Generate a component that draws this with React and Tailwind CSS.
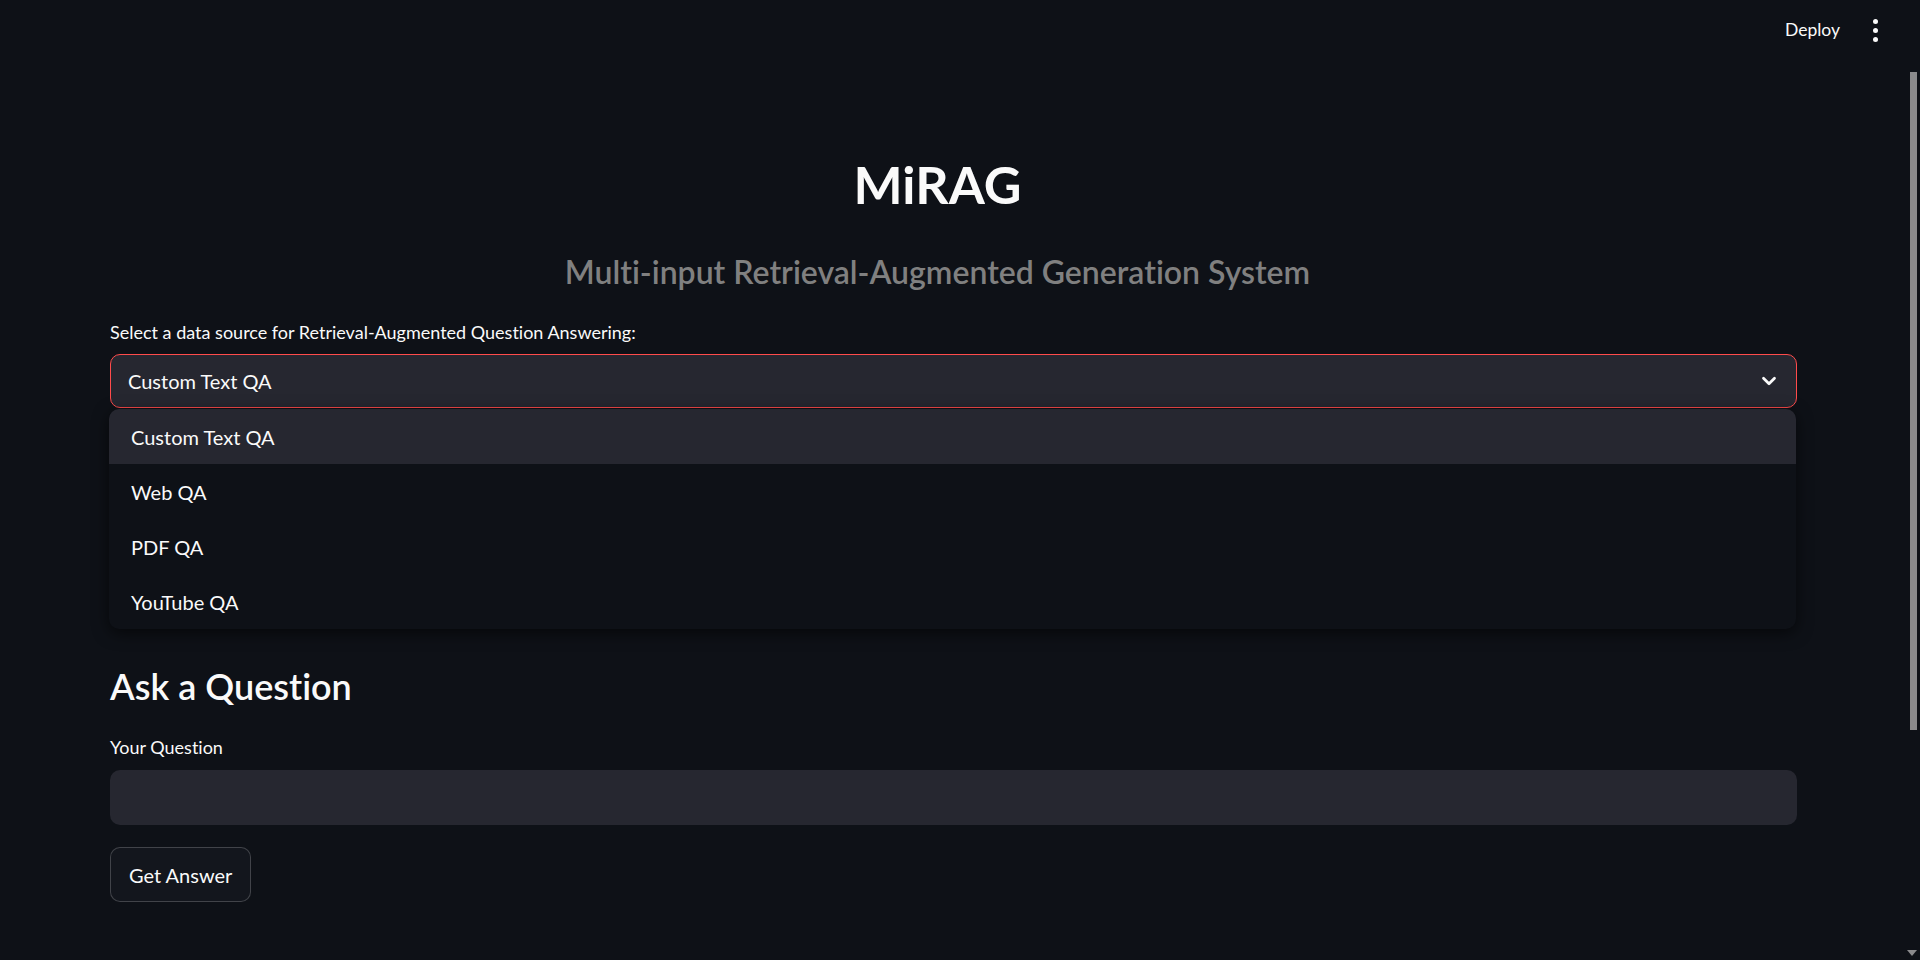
import React from "react";
import { ChevronDown } from "lucide-react";

const OPTIONS = ["Custom Text QA", "Web QA", "PDF QA", "YouTube QA"];

const App = () => {
  return (
    <div
      className="relative h-[960px] w-full overflow-hidden bg-[#0e1117] text-[#fafafa] [font-variant-ligatures:none]"
      style={{ fontFamily: "Lato, 'Noto Sans', sans-serif" }}
    >
      {/* Top bar */}
      <header className="flex h-[60px] items-center justify-end gap-[33px] pr-[42px]">
        <button className="text-[17.5px] text-[#fafafa]">Deploy</button>
        <div className="flex flex-col gap-[4px]">
          <span className="block h-[5px] w-[5px] rounded-full bg-[#fafafa]" />
          <span className="block h-[5px] w-[5px] rounded-full bg-[#fafafa]" />
          <span className="block h-[5px] w-[5px] rounded-full bg-[#fafafa]" />
        </div>
      </header>

      {/* Main */}
      <main className="ml-[110px] flex w-[1687px] flex-col">
        <h1 className="mt-[92px] pr-[32px] text-center text-[52px] font-bold leading-[64px] text-[#fafafa]">
          MiRAG
        </h1>
        <h3 className="mt-[36px] pr-[32px] text-center text-[32px] font-semibold leading-[40px] text-[#808080]">
          Multi-input Retrieval-Augmented Generation System
        </h3>

        <label className="mt-[28px] text-[18px] leading-[24px] text-[#fafafa]">
          Select a data source for Retrieval-Augmented Question Answering:
        </label>

        <div className="relative mt-[10px]">
          <div className="flex h-[54px] items-center justify-between rounded-[10px] border border-[#ff4b4b] bg-[#262730] pl-[17px] pr-[16px] text-[20px]">
            <span>Custom Text QA</span>
            <ChevronDown size={22} strokeWidth={3} className="text-[#fafafa]" />
          </div>

          {/* Open dropdown menu */}
          <ul className="absolute left-[-1px] right-[1px] top-[55px] z-10 overflow-hidden rounded-[10px] bg-[#0e1117] shadow-[0_4px_16px_rgba(0,0,0,0.6)]">
            {OPTIONS.map((opt, i) => (
              <li
                key={opt}
                className={
                  i === 0
                    ? "flex h-[55px] items-center bg-[#262730] pl-[22px] text-[20px]"
                    : "flex h-[55px] items-center pl-[22px] text-[20px]"
                }
              >
                {opt}
              </li>
            ))}
          </ul>
        </div>

        <h2 className="mt-[254px] text-[36px] font-semibold leading-[48px] text-[#fafafa]">
          Ask a Question
        </h2>

        <label className="mt-[25px] text-[18px] leading-[24px] text-[#fafafa]">
          Your Question
        </label>
        <input
          type="text"
          className="mt-[11px] h-[55px] w-full rounded-[10px] bg-[#262730] px-[17px] text-[20px] outline-none"
        />

        <div className="mt-[22px]">
          <button className="h-[55px] rounded-[10px] border border-[rgba(250,250,250,0.2)] bg-[#13161d] px-[18px] text-[20px] text-[#fafafa]">
            Get Answer
          </button>
        </div>
      </main>

      {/* Scrollbar */}
      <div className="absolute right-[3px] top-[72px] h-[658px] w-[7px] bg-[#8a8a8c]" />
      <div className="absolute bottom-[4px] right-[3px] h-0 w-0 border-x-[5px] border-t-[6px] border-x-transparent border-t-[#8a8a8c]" />
    </div>
  );
};

export default App;
